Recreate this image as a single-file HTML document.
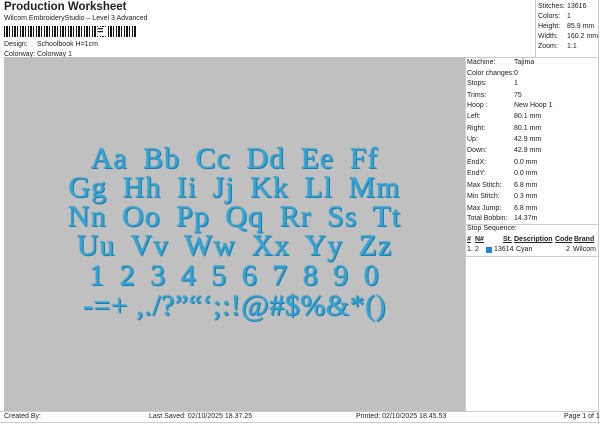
<!DOCTYPE html>
<html><head><style>
*{margin:0;padding:0;box-sizing:border-box}
body{width:600px;height:424px;background:#fff;font-family:"Liberation Sans",sans-serif;color:#222;position:relative;overflow:hidden;font-size:7px}
.a{position:absolute;white-space:nowrap}
#gray{position:absolute;left:4px;top:57px;width:461px;height:354px;background:#c0c0c0}
.row{position:absolute;left:4px;width:461px;text-align:center;font-family:"Liberation Serif",serif;font-size:30px;color:#2fa6d8;text-shadow:0 0 1px #1a6f9a,1px 1px 0 #1b7fae;letter-spacing:1px;word-spacing:7px}
.rp div{position:absolute;white-space:nowrap}
</style></head><body>
<div class="a" style="left:4px;top:1px;font-size:11.5px;font-weight:bold">Production Worksheet</div>
<div class="a" style="left:4px;top:15px;font-size:7px">Wilcom EmbroideryStudio – Level 3 Advanced</div>
<div class="a" style="left:4px;top:26px;width:132px;height:11px;background:repeating-linear-gradient(90deg,#111 0 1px,#fff 1px 2px,#111 2px 4px,#fff 4px 5px,#111 5px 6px,#fff 6px 8px)"></div>
<div class="a" style="left:97px;top:27px;width:10px;height:9px;background:#fff;font-size:11px;font-weight:bold;line-height:9px">=</div>
<div class="a" style="left:4px;top:41px">Design:</div><div class="a" style="left:37px;top:41px">Schoolbook H=1cm</div>
<div class="a" style="left:4px;top:51px">Colorway:</div><div class="a" style="left:37px;top:51px">Colorway 1</div>
<div class="a" style="left:535px;top:0;width:1px;height:57px;background:#ccc"></div>
<div class="a" style="left:598px;top:0;width:1px;height:424px;background:#ccc"></div>
<div class="rp">
<div style="left:538px;top:3px">Stitches:</div><div style="left:567px;top:3px">13616</div>
<div style="left:538px;top:13px">Colors:</div><div style="left:567px;top:13px">1</div>
<div style="left:538px;top:23px">Height:</div><div style="left:567px;top:23px">85.9 mm</div>
<div style="left:538px;top:33px">Width:</div><div style="left:567px;top:33px">160.2 mm</div>
<div style="left:538px;top:43px">Zoom:</div><div style="left:567px;top:43px">1:1</div>
</div>
<div class="a" style="left:465px;top:57px;width:134px;height:1px;background:#ccc"></div>
<div id="gray"></div>
<div class="a" style="left:465px;top:57px;width:1px;height:354px;background:#ccc"></div>
<div class="rp">
<div style="left:467px;top:59px">Machine:</div><div style="left:514px;top:59px">Tajima</div>
<div style="left:467px;top:70px">Color changes:</div><div style="left:514px;top:70px">0</div>
<div style="left:467px;top:80px">Stops:</div><div style="left:514px;top:80px">1</div>
<div style="left:467px;top:92px">Trims:</div><div style="left:514px;top:92px">75</div>
<div style="left:467px;top:102px">Hoop :</div><div style="left:514px;top:102px">New Hoop 1</div>
<div style="left:467px;top:113px">Left:</div><div style="left:514px;top:113px">80.1 mm</div>
<div style="left:467px;top:125px">Right:</div><div style="left:514px;top:125px">80.1 mm</div>
<div style="left:467px;top:136px">Up:</div><div style="left:514px;top:136px">42.9 mm</div>
<div style="left:467px;top:147px">Down:</div><div style="left:514px;top:147px">42.9 mm</div>
<div style="left:467px;top:159px">EndX:</div><div style="left:514px;top:159px">0.0 mm</div>
<div style="left:467px;top:170px">EndY:</div><div style="left:514px;top:170px">0.0 mm</div>
<div style="left:467px;top:182px">Max Stitch:</div><div style="left:514px;top:182px">6.8 mm</div>
<div style="left:467px;top:193px">Min Stitch:</div><div style="left:514px;top:193px">0.3 mm</div>
<div style="left:467px;top:205px">Max Jump:</div><div style="left:514px;top:205px">6.8 mm</div>
<div style="left:467px;top:215px">Total Bobbin:</div><div style="left:514px;top:215px">14.37m</div>
<div style="left:465px;top:224px;width:134px;height:1px;background:#ccc"></div>
<div style="left:467px;top:225px">Stop Sequence:</div>
<div style="left:467px;top:236px;font-weight:bold;text-decoration:underline">#</div>
<div style="left:475px;top:236px;font-weight:bold;text-decoration:underline">N#</div>
<div style="left:503px;top:236px;font-weight:bold;text-decoration:underline">St.</div>
<div style="left:514px;top:236px;font-weight:bold;text-decoration:underline">Description</div>
<div style="left:555px;top:236px;font-weight:bold;text-decoration:underline">Code</div>
<div style="left:574px;top:236px;font-weight:bold;text-decoration:underline">Brand</div>
<div style="left:467px;top:246px">1.</div><div style="left:475px;top:246px">2</div>
<div style="left:486px;top:247px;width:6px;height:6px;background:#1a8ad8"></div>
<div style="left:494px;top:246px">13614</div><div style="left:516px;top:246px">Cyan</div>
<div style="left:566px;top:246px">2</div><div style="left:573px;top:246px">Wilcom</div>
<div style="left:465px;top:256px;width:134px;height:1px;background:#ccc"></div>
</div>
<div class="row" style="top:142px">Aa Bb Cc Dd Ee Ff</div>
<div class="row" style="top:171px">Gg Hh Ii Jj Kk Ll Mm</div>
<div class="row" style="top:200px">Nn Oo Pp Qq Rr Ss Tt</div>
<div class="row" style="top:229px">Uu Vv Ww Xx Yy Zz</div>
<div class="row" style="top:259px;word-spacing:6px;letter-spacing:1px">1 2 3 4 5 6 7 8 9 0</div>
<div class="row" style="top:289px;word-spacing:0;letter-spacing:0.5px">-=+ ,./?”“‘;:!@#$%&amp;*()</div>
<div class="a" style="left:0;top:411px;width:600px;height:1px;background:#ccc"></div>
<div class="a" style="left:0;top:422px;width:600px;height:1px;background:#ccc"></div>
<div class="a" style="left:4px;top:413px">Created By:</div>
<div class="a" style="left:149px;top:413px">Last Saved: 02/10/2025 18.37.25</div>
<div class="a" style="left:356px;top:413px">Printed: 02/10/2025 18.45.53</div>
<div class="a" style="left:564px;top:413px">Page 1 of 1</div>
</body></html>
